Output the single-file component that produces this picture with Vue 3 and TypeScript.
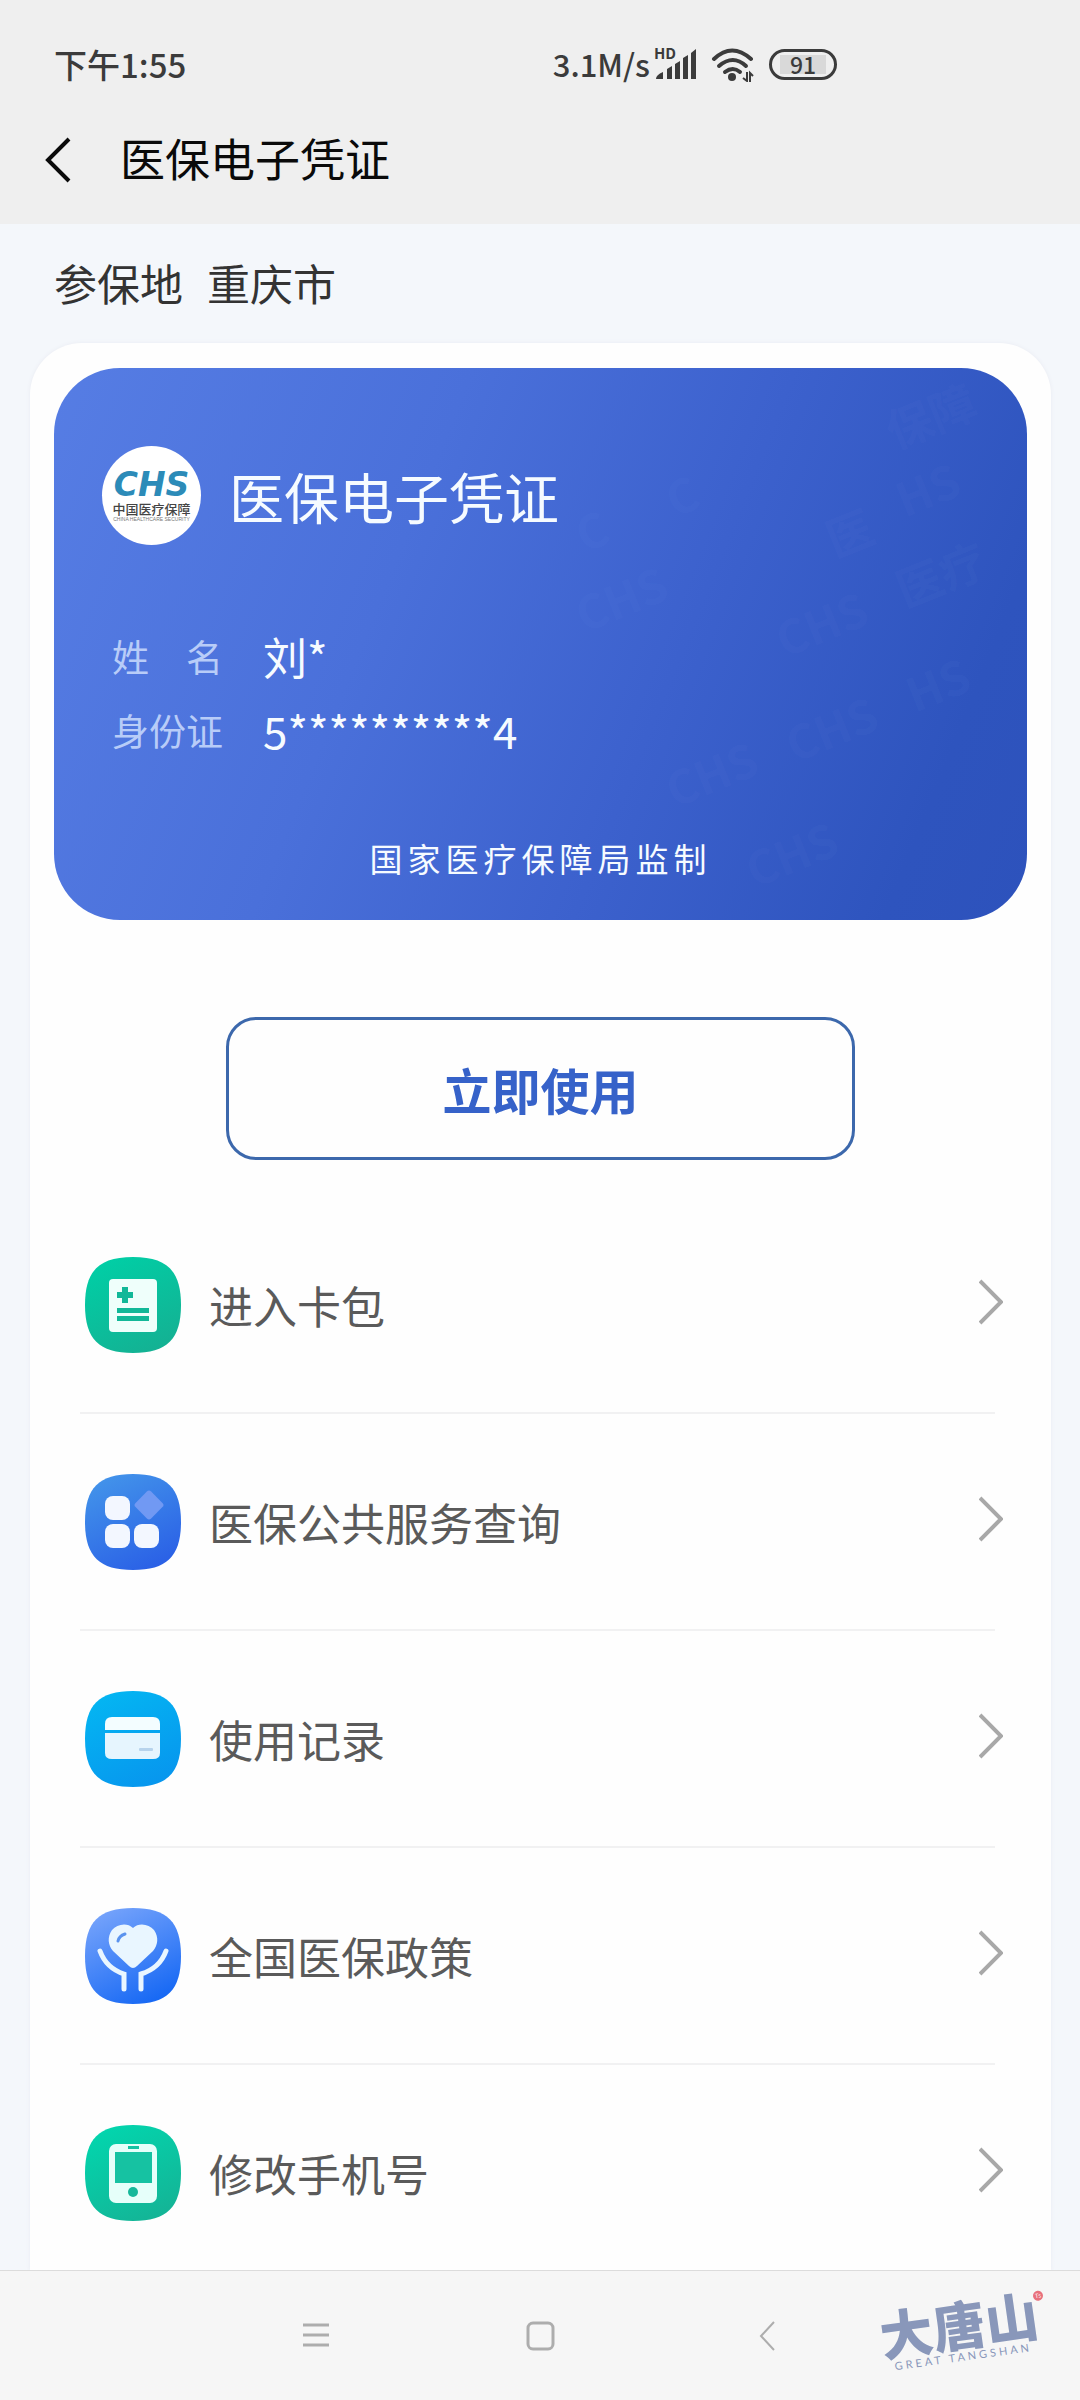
<script setup lang="ts">
type IconName = 'wallet' | 'services' | 'records' | 'policy' | 'phone'

interface MenuItem {
  icon: IconName
  label: string
  from: string
  to: string
}

interface Mark {
  x: number
  y: number
  text: string
}

const menu: MenuItem[] = [
  { icon: 'wallet', label: '进入卡包', from: '#00cfa6', to: '#14b193' },
  { icon: 'services', label: '医保公共服务查询', from: '#4394ea', to: '#2a60e6' },
  { icon: 'records', label: '使用记录', from: '#04b6f2', to: '#0796ee' },
  { icon: 'policy', label: '全国医保政策', from: '#77a4fb', to: '#1668f4' },
  { icon: 'phone', label: '修改手机号', from: '#02d6ae', to: '#14b496' },
]

const marks: Mark[] = [
  { x: 530, y: 185, text: 'C' },
  { x: 620, y: 150, text: 'C' },
  { x: 780, y: 190, text: '医' },
  { x: 850, y: 150, text: 'HS' },
  { x: 840, y: 82, text: '保障' },
  { x: 530, y: 265, text: 'CHS' },
  { x: 730, y: 290, text: 'CHS' },
  { x: 850, y: 240, text: '医疗' },
  { x: 620, y: 440, text: 'CHS' },
  { x: 740, y: 395, text: 'CHS' },
  { x: 860, y: 345, text: 'HS' },
  { x: 700, y: 520, text: 'CHS' },
]
</script>

<template>
  <div class="screen">
    <header class="top">
      <div class="status">
        <span class="time">下午1:55</span>
        <div class="indicators">
          <span>3.1M/s</span>
          <svg class="signal" viewBox="0 0 44 36" aria-hidden="true">
            <text x="0" y="13" class="hd">HD</text>
            <path d="M2 33q0-4 7-7v7zM13 33v-10l5-3v13zM21 33v-15l5-3v18zM29 33v-21l5-3v24zM37 33v-26l5-4v30z" />
          </svg>
          <svg class="wifi" viewBox="0 0 44 36" aria-hidden="true">
            <g fill="none" stroke="#3b3b3b" stroke-width="4" stroke-linecap="round">
              <path d="M3 13q18-17 37 0" />
              <path d="M8 20q14-12 27 0" />
              <path d="M14 26q8-6 15 0" />
            </g>
            <circle cx="21" cy="31" r="4" fill="#3b3b3b" />
            <path d="M36 26v9l-4-3M39 36v-9l3 3" fill="none" stroke="#3b3b3b" stroke-width="2" />
          </svg>
          <span class="battery"><span class="charge">91</span></span>
        </div>
      </div>
      <div class="titlebar">
        <button class="back" type="button" aria-label="返回">
          <svg viewBox="0 0 28 46" aria-hidden="true">
            <path d="M25 2L4 23l21 21" fill="none" stroke="#0a0a0a" stroke-width="4" />
          </svg>
        </button>
        <h1>医保电子凭证</h1>
      </div>
    </header>

    <main>
      <p class="region"><span>参保地</span><span>重庆市</span></p>

      <section class="panel">
        <article class="card">
          <svg class="marks" viewBox="0 0 972 552" preserveAspectRatio="xMaxYMid slice" aria-hidden="true">
            <text v-for="(m, i) in marks" :key="i" :transform="`translate(${m.x} ${m.y}) rotate(-22)`">{{ m.text }}</text>
          </svg>
          <div class="card-head">
            <div class="logo">
              <span class="logo-chs">CHS</span>
              <span class="logo-cn">中国医疗保障</span>
              <span class="logo-en">CHINA HEALTHCARE SECURITY</span>
            </div>
            <h2>医保电子凭证</h2>
          </div>
          <dl>
            <dt>姓　名</dt>
            <dd>刘*</dd>
            <dt>身份证</dt>
            <dd>5**********4</dd>
          </dl>
          <p class="issuer">国家医疗保障局监制</p>
        </article>

        <button class="use" type="button">立即使用</button>

        <ul class="menu">
          <li v-for="item in menu" :key="item.icon">
            <a href="#">
              <svg class="icon" viewBox="0 0 96 96" aria-hidden="true">
                <defs>
                  <linearGradient :id="`bg-${item.icon}`" x1="0.2" y1="0" x2="0.7" y2="1">
                    <stop offset="0" :stop-color="item.from" />
                    <stop offset="1" :stop-color="item.to" />
                  </linearGradient>
                </defs>
                <path d="M48 0C82 0 96 14 96 48S82 96 48 96 0 82 0 48 14 0 48 0Z" :fill="`url(#bg-${item.icon})`" />
                <g v-if="item.icon === 'wallet'">
                  <rect x="24" y="22" width="48" height="53" rx="4" fill="#effffb" />
                  <path d="M32 35h5v-5h6v5h5v6h-5v5h-6v-5h-5zM32 51h32v5H32zM32 59h32v5H32z" fill="#12b898" />
                </g>
                <g v-else-if="item.icon === 'services'">
                  <rect x="53" y="20" width="22" height="22" rx="3" fill="#7199f3" transform="rotate(45 64 31)" />
                  <g fill="#f3f7ff">
                    <rect x="20" y="22" width="25" height="24" rx="8" />
                    <rect x="20" y="50" width="25" height="24" rx="8" />
                    <rect x="49" y="50" width="25" height="24" rx="8" />
                  </g>
                </g>
                <g v-else-if="item.icon === 'records'">
                  <path d="M20 39v-6q0-7 7-7h41q7 0 7 7v6z" fill="#f3fdff" />
                  <path d="M20 42h55v20q0 6-7 6H27q-7 0-7-6z" fill="#e6f5fe" />
                  <rect x="54" y="57" width="14" height="3" rx="1" fill="#b7d3ec" />
                </g>
                <g v-else-if="item.icon === 'policy'">
                  <path d="M48 20C42 14 32 16 27 22C22 29 23 37 28 43L44 58Q48 62 52 58L68 43C73 37 74 29 69 22C64 16 54 14 48 20Z" fill="#e9f6ff" />
                  <path d="M33 33q1-5 7-7" fill="none" stroke="#5b93ee" stroke-width="3" stroke-linecap="round" />
                  <path d="M15 43C19 54 27 62 39 66V81M81 43C77 54 69 62 56 66V81" fill="none" stroke="#e9f6ff" stroke-width="5" stroke-linecap="round" />
                </g>
                <g v-else>
                  <rect x="24" y="19" width="48" height="59" rx="7" fill="#e6fffa" />
                  <path d="M30 27h37v31H30zM43 21h11v3H43z" fill="#16c2a2" />
                  <circle cx="48" cy="67" r="5" fill="#16b89a" />
                </g>
              </svg>
              <span class="label">{{ item.label }}</span>
              <svg class="chevron" viewBox="0 0 24 46" aria-hidden="true">
                <path d="M1 2l21 21L1 44" fill="none" stroke="#a8a8a8" stroke-width="4" />
              </svg>
            </a>
          </li>
        </ul>
      </section>
    </main>

    <nav class="system">
      <button type="button" aria-label="菜单">
        <svg viewBox="0 0 30 30" aria-hidden="true">
          <path d="M3 4h26M3 14h26M3 24h26" fill="none" stroke="#adadad" stroke-width="3" />
        </svg>
      </button>
      <button type="button" aria-label="主页">
        <svg viewBox="0 0 30 30" aria-hidden="true">
          <rect x="2" y="2" width="25" height="26" rx="5" fill="none" stroke="#adadad" stroke-width="3" />
        </svg>
      </button>
      <button type="button" aria-label="后退">
        <svg viewBox="0 0 30 30" aria-hidden="true">
          <path d="M22 1L9 15l13 14" fill="none" stroke="#adadad" stroke-width="2" />
        </svg>
      </button>
      <div class="stamp">
        <span class="stamp-cn">大唐山</span>
        <span class="stamp-en">GREAT TANGSHAN</span>
        <span class="stamp-dot">Ts</span>
      </div>
    </nav>
  </div>
</template>

<style>
body {
  margin: 0;
  background: #f4f7fb;
}
</style>

<style scoped>
.screen {
  display: flex;
  flex-direction: column;
  min-height: 100vh;
  background: #f4f7fb;
  font-family: "Noto Sans CJK SC", "Noto Sans", sans-serif;
}
h1,
h2,
p,
dl,
dd,
ul {
  margin: 0;
  padding: 0;
  font-weight: 400;
}
button {
  padding: 0;
  border: 0;
  background: none;
  font-family: inherit;
}
svg {
  display: block;
}
.top {
  background: #efefef;
}
.status {
  display: flex;
  align-items: center;
  justify-content: space-between;
  height: 64px;
  padding: 32px 243px 0 54px;
  color: #3b3b3b;
  font-size: 31px;
  font-weight: 500;
  line-height: 48px;
}
.time {
  font-size: 33px;
}
.indicators {
  display: flex;
  align-items: center;
}
.signal {
  overflow: visible;
  width: 44px;
  height: 36px;
  margin-left: 4px;
  fill: #3b3b3b;
}
.hd {
  font-size: 15px;
  font-weight: 700;
}
.wifi {
  width: 44px;
  height: 36px;
  margin: 0 14px 0 13px;
}
.battery {
  box-sizing: border-box;
  width: 68px;
  height: 31px;
  padding: 3px 8px;
  border: 3px solid #3b3b3b;
  border-radius: 16px;
}
.charge {
  display: block;
  background: #d9d9d9;
  font-size: 23px;
  line-height: 19px;
  text-align: center;
}
.titlebar {
  display: flex;
  align-items: center;
  gap: 48px;
  height: 128px;
  padding-left: 44px;
}
.back svg {
  width: 28px;
  height: 46px;
}
h1 {
  padding-bottom: 4px;
  color: #0a0a0a;
  font-size: 45px;
  line-height: 64px;
}
main {
  display: flex;
  flex: 1;
  flex-direction: column;
}
.region {
  display: flex;
  align-items: center;
  gap: 24px;
  height: 115px;
  padding: 0 0 4px 54px;
  color: #333;
  font-size: 43px;
}
.panel {
  flex: 1;
  margin: 0 29px 0 30px;
  padding: 25px 24px 44px;
  border-radius: 52px 52px 0 0;
  background: #fefefe;
  box-shadow: 0 0 4px #e9ebf2;
}
.card {
  position: relative;
  overflow: hidden;
  padding: 78px 48px 38px;
  border-radius: 66px;
  background: linear-gradient(112deg, #567de4 0%, #4a70da 35%, #3c61cd 62%, #2e54be 88%, #2d52bc 100%);
  color: #f6fbff;
}
.marks {
  position: absolute;
  inset: 0;
  width: 100%;
  height: 100%;
  fill: #9db8ff;
  fill-opacity: 0.05;
  font-size: 46px;
  font-weight: 700;
}
.card-head {
  display: flex;
  align-items: center;
  gap: 28px;
}
.logo {
  display: flex;
  flex-direction: column;
  align-items: center;
  justify-content: center;
  box-sizing: border-box;
  width: 99px;
  height: 99px;
  padding-bottom: 2px;
  border-radius: 50%;
  background: #fff;
  white-space: nowrap;
}
.logo-chs {
  color: #2c8bb8;
  font-family: "DejaVu Sans", sans-serif;
  font-size: 33px;
  font-style: italic;
  font-weight: 700;
  line-height: 34px;
}
.logo-cn {
  color: #444;
  font-size: 13px;
  font-weight: 500;
  line-height: 14px;
}
.logo-en {
  color: #777;
  font-family: "Liberation Sans", sans-serif;
  font-size: 5px;
  line-height: 6px;
}
h2 {
  padding-bottom: 2px;
  font-size: 55px;
  line-height: 80px;
}
dl {
  display: grid;
  grid-template-columns: max-content 1fr;
  grid-auto-rows: 74px;
  align-items: center;
  column-gap: 40px;
  margin-top: 74px;
  padding-left: 10px;
}
dt {
  color: #b8ccf8;
  font-size: 37px;
  line-height: 74px;
}
dd {
  font-size: 44px;
  line-height: 74px;
}
.issuer {
  margin-top: 67px;
  font-size: 33px;
  letter-spacing: 5px;
  line-height: 48px;
  text-align: center;
}
.use {
  display: block;
  box-sizing: border-box;
  width: calc(100% - 344px);
  height: 143px;
  margin: 97px auto 0;
  border: 3px solid #3c68ac;
  border-radius: 30px;
  color: #3662c9;
  font-size: 49px;
  font-weight: 700;
}
.menu {
  margin: 37px 32px 0 26px;
  list-style: none;
}
.menu li {
  padding: 60px 0 59px;
  border-bottom: 2px solid #f1f1f2;
}
.menu li:last-child {
  padding-bottom: 0;
  border-bottom: 0;
}
.menu a {
  display: flex;
  align-items: center;
  margin-right: -8px;
  padding-left: 5px;
  color: #5a5a5a;
  font-size: 44px;
  line-height: 64px;
  text-decoration: none;
}
.icon {
  width: 96px;
  height: 96px;
}
.label {
  flex: 1;
  margin-left: 28px;
}
.chevron {
  width: 24px;
  height: 46px;
  margin-bottom: 6px;
}
.system {
  position: relative;
  display: flex;
  align-items: center;
  justify-content: center;
  gap: 196px;
  height: 129px;
  padding-left: 2px;
  border-top: 1px solid #dcdcdc;
  background: #f6f6f6;
}
.system svg {
  width: 30px;
  height: 30px;
}
.stamp {
  position: absolute;
  right: 41px;
  bottom: 36px;
  display: flex;
  flex-direction: column;
  align-items: center;
  color: #8997ba;
  transform: rotate(-8deg);
}
.stamp-cn {
  font-size: 53px;
  font-weight: 900;
  line-height: 54px;
}
.stamp-en {
  font-family: Lato, sans-serif;
  font-size: 11px;
  letter-spacing: 3px;
  line-height: 14px;
}
.stamp-dot {
  position: absolute;
  top: 6px;
  right: -8px;
  width: 10px;
  height: 10px;
  border-radius: 50%;
  background: #e8707c;
  color: #fff;
  font-size: 6px;
  line-height: 10px;
  text-align: center;
}
</style>
